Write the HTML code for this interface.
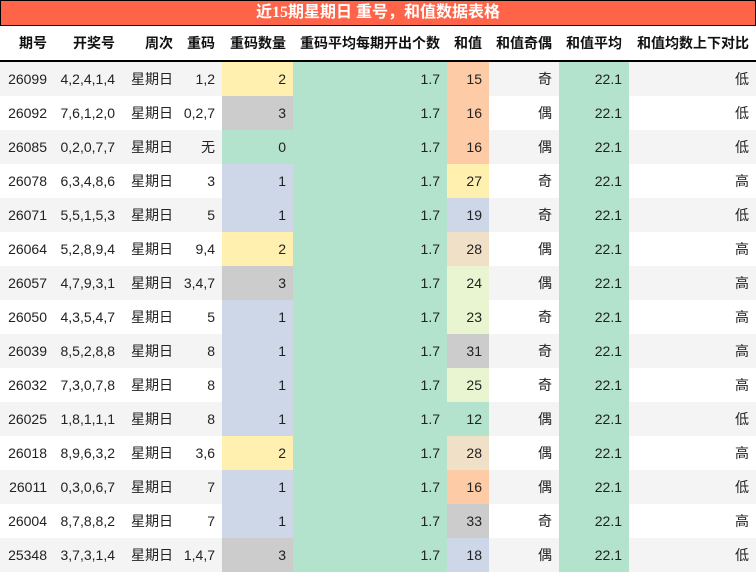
<!DOCTYPE html><html><head><meta charset="utf-8"><style>
body{margin:0;width:756px;height:573px;overflow:hidden;background:#fff;font-family:"Liberation Sans","Noto Sans CJK SC",sans-serif;font-size:14px;color:#222}
.t{position:absolute;left:0;top:0;width:754px;height:24px;background:#ff6448;border:1px solid #000;color:#fff;font-weight:bold;font-size:16px;text-align:center;line-height:24px;font-family:"Liberation Serif","Noto Sans CJK SC",sans-serif}
table{position:absolute;top:26px;left:0;border-collapse:collapse;width:756px;table-layout:fixed}
th{height:34px;font-weight:bold;text-align:right;padding:0 7px 0 0;border-bottom:2px solid #000;color:#111}
td{height:34px;text-align:right;padding:0 7px 0 0}
tr:nth-child(odd) td{background:#f4f4f4}
tr td.y{background:#fff0b0}tr td.g{background:#cccccc}tr td.m{background:#b3e3cc}tr td.b{background:#cdd7e8}tr td.p{background:#fdcba6}tr td.e{background:#f0e0c8}tr td.l{background:#e8f5d0}
</style></head><body>
<div class="t">近15期星期日 重号，和值数据表格</div>
<table>
<colgroup><col style="width:54px"><col style="width:68px"><col style="width:58px"><col style="width:42px"><col style="width:71px"><col style="width:154px"><col style="width:42px"><col style="width:70px"><col style="width:70px"><col style="width:127px"></colgroup>
<thead><tr><th>期号</th><th>开奖号</th><th>周次</th><th>重码</th><th>重码数量</th><th>重码平均每期开出个数</th><th>和值</th><th>和值奇偶</th><th>和值平均</th><th>和值均数上下对比</th></tr></thead>
<tbody>
<tr><td>26099</td><td>4,2,4,1,4</td><td>星期日</td><td>1,2</td><td class="y">2</td><td class="m">1.7</td><td class="p">15</td><td>奇</td><td class="m">22.1</td><td>低</td></tr>
<tr><td>26092</td><td>7,6,1,2,0</td><td>星期日</td><td>0,2,7</td><td class="g">3</td><td class="m">1.7</td><td class="p">16</td><td>偶</td><td class="m">22.1</td><td>低</td></tr>
<tr><td>26085</td><td>0,2,0,7,7</td><td>星期日</td><td>无</td><td class="m">0</td><td class="m">1.7</td><td class="p">16</td><td>偶</td><td class="m">22.1</td><td>低</td></tr>
<tr><td>26078</td><td>6,3,4,8,6</td><td>星期日</td><td>3</td><td class="b">1</td><td class="m">1.7</td><td class="y">27</td><td>奇</td><td class="m">22.1</td><td>高</td></tr>
<tr><td>26071</td><td>5,5,1,5,3</td><td>星期日</td><td>5</td><td class="b">1</td><td class="m">1.7</td><td class="b">19</td><td>奇</td><td class="m">22.1</td><td>低</td></tr>
<tr><td>26064</td><td>5,2,8,9,4</td><td>星期日</td><td>9,4</td><td class="y">2</td><td class="m">1.7</td><td class="e">28</td><td>偶</td><td class="m">22.1</td><td>高</td></tr>
<tr><td>26057</td><td>4,7,9,3,1</td><td>星期日</td><td>3,4,7</td><td class="g">3</td><td class="m">1.7</td><td class="l">24</td><td>偶</td><td class="m">22.1</td><td>高</td></tr>
<tr><td>26050</td><td>4,3,5,4,7</td><td>星期日</td><td>5</td><td class="b">1</td><td class="m">1.7</td><td class="l">23</td><td>奇</td><td class="m">22.1</td><td>高</td></tr>
<tr><td>26039</td><td>8,5,2,8,8</td><td>星期日</td><td>8</td><td class="b">1</td><td class="m">1.7</td><td class="g">31</td><td>奇</td><td class="m">22.1</td><td>高</td></tr>
<tr><td>26032</td><td>7,3,0,7,8</td><td>星期日</td><td>8</td><td class="b">1</td><td class="m">1.7</td><td class="l">25</td><td>奇</td><td class="m">22.1</td><td>高</td></tr>
<tr><td>26025</td><td>1,8,1,1,1</td><td>星期日</td><td>8</td><td class="b">1</td><td class="m">1.7</td><td class="m">12</td><td>偶</td><td class="m">22.1</td><td>低</td></tr>
<tr><td>26018</td><td>8,9,6,3,2</td><td>星期日</td><td>3,6</td><td class="y">2</td><td class="m">1.7</td><td class="e">28</td><td>偶</td><td class="m">22.1</td><td>高</td></tr>
<tr><td>26011</td><td>0,3,0,6,7</td><td>星期日</td><td>7</td><td class="b">1</td><td class="m">1.7</td><td class="p">16</td><td>偶</td><td class="m">22.1</td><td>低</td></tr>
<tr><td>26004</td><td>8,7,8,8,2</td><td>星期日</td><td>7</td><td class="b">1</td><td class="m">1.7</td><td class="g">33</td><td>奇</td><td class="m">22.1</td><td>高</td></tr>
<tr><td>25348</td><td>3,7,3,1,4</td><td>星期日</td><td>1,4,7</td><td class="g">3</td><td class="m">1.7</td><td class="b">18</td><td>偶</td><td class="m">22.1</td><td>低</td></tr>
</tbody></table>
</body></html>
